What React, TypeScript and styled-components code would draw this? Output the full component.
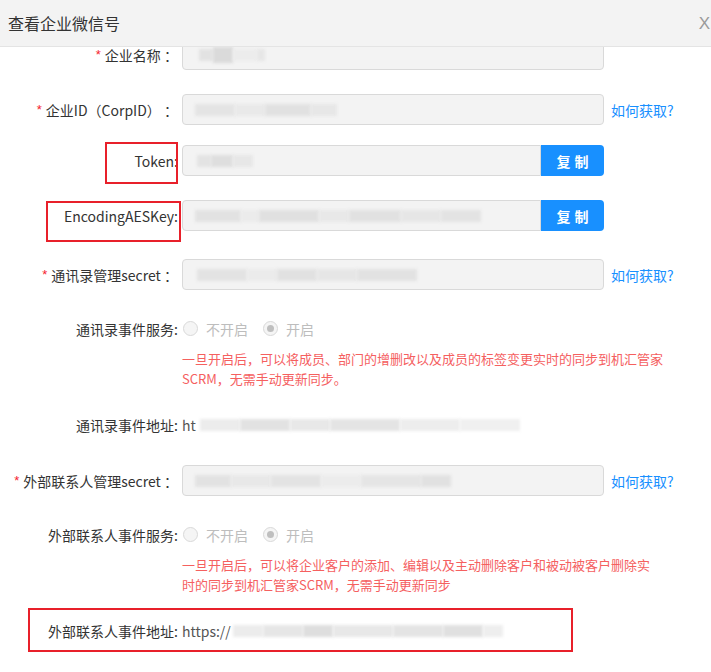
import React from "react";
import styled, { createGlobalStyle } from "styled-components";

const Global = createGlobalStyle`
  html, body { margin: 0; padding: 0; background: #fff; }
  body { font-family: "Noto Sans CJK SC", "Noto Sans", sans-serif; color: #333; }
`;

const Page = styled.div`
  width: 711px;
  height: 672px;
  overflow: hidden;
  display: flex;
  flex-direction: column;
  background: #fff;
`;

const Header = styled.div`
  flex: none;
  height: 46px;
  background: #f3f3f3;
  border-bottom: 1px solid #e4e4e4;
  display: flex;
  align-items: center;
  justify-content: space-between;
  padding: 0 1px 0 8px;
  position: relative;
  z-index: 2;
`;

const Title = styled.div`
  font-size: 16px;
  color: #333;
`;

const Close = styled.div`
  font-family: "Liberation Sans", Arial, sans-serif;
  font-size: 17px;
  color: #9a9a9a;
  margin-top: 2px;
`;

const Body = styled.div`
  flex: 1;
  overflow: hidden;
`;

const Scroller = styled.div`
  margin-top: -8px;
  display: flex;
  flex-direction: column;
`;

const Row = styled.div<{ $mt: number; $top?: boolean }>`
  position: relative;
  display: flex;
  align-items: ${(p) => (p.$top ? "flex-start" : "center")};
  margin-top: ${(p) => p.$mt}px;
  min-height: 31px;
`;

const Label = styled.div`
  flex: none;
  width: 178px;
  height: 31px;
  display: flex;
  align-items: center;
  justify-content: flex-end;
  font-size: 14px;
  color: #333;
  white-space: nowrap;
`;

const Star = styled.span`
  color: #f5222d;
  font-size: 13px;
  margin-right: 4px;
  font-family: "Liberation Sans", sans-serif;
`;

const Field = styled.div`
  margin-left: 4px;
  display: flex;
  align-items: center;
`;

const InputBox = styled.div<{ $w: number; $joined?: boolean }>`
  box-sizing: border-box;
  width: ${(p) => p.$w}px;
  height: 31px;
  background: #f3f3f3;
  border: 1px solid #d9d9d9;
  border-radius: ${(p) => (p.$joined ? "4px 0 0 4px" : "4px")};
  display: flex;
  align-items: center;
  padding-left: 10px;
  overflow: hidden;
`;

const CopyButton = styled.button`
  box-sizing: border-box;
  width: 63px;
  height: 31px;
  border: none;
  background: #1890ff;
  color: #fff;
  border-radius: 0 4px 4px 0;
  font-family: "Noto Sans CJK SC", sans-serif;
  font-size: 14px;
  font-weight: 700;
  letter-spacing: 4px;
  padding: 0 0 0 4px;
`;

const HelpLink = styled.a`
  margin-left: 7px;
  font-size: 14px;
  color: #1890ff;
  text-decoration: none;
`;

const Smudge = styled.span<{ $w: number; $c: string; $h?: number }>`
  display: inline-block;
  width: ${(p) => p.$w}px;
  height: ${(p) => p.$h ?? 12}px;
  background: ${(p) => p.$c};
  filter: blur(1.5px);
  flex: none;
`;

const Column = styled.div`
  margin-left: 4px;
  display: flex;
  flex-direction: column;
`;

const RadioGroup = styled.div`
  height: 31px;
  display: flex;
  align-items: center;
`;

const RadioItem = styled.label`
  display: flex;
  align-items: center;
  margin-right: 14px;
  font-size: 14px;
  color: #bdbdbd;
`;

const RadioCircle = styled.span<{ $checked?: boolean }>`
  box-sizing: border-box;
  width: 15px;
  height: 15px;
  border-radius: 50%;
  border: 1px solid #d9d9d9;
  background: #f5f5f5;
  margin: 0 8px 0 1px;
  display: flex;
  align-items: center;
  justify-content: center;
  &::after {
    content: "";
    display: ${(p) => (p.$checked ? "block" : "none")};
    width: 7px;
    height: 7px;
    border-radius: 50%;
    background: #bfbfbf;
  }
`;

const Hint = styled.div`
  margin-top: 5px;
  font-size: 13px;
  line-height: 20px;
  color: #f5605f;
  white-space: nowrap;
`;

const Value = styled.div`
  margin-left: 4px;
  display: flex;
  align-items: center;
  font-size: 14px;
  color: #555;
  height: 31px;
`;

const Annotation = styled.div<{ $l: number; $t: number; $w: number; $h: number }>`
  position: absolute;
  left: ${(p) => p.$l}px;
  top: ${(p) => p.$t}px;
  width: ${(p) => p.$w}px;
  height: ${(p) => p.$h}px;
  box-sizing: border-box;
  border: 2px solid #e8202a;
  pointer-events: none;
`;

type S = [number, string, number?];

const Smudges = ({ items, ml = 0 }: { items: S[]; ml?: number }) => (
  <>
    {ml ? <Smudge $w={ml} $c="transparent" /> : null}
    {items.map(([w, c, h], i) => (
      <Smudge key={i} $w={w} $c={c} $h={h} />
    ))}
  </>
);

export default function App() {
  return (
    <Page>
      <Global />
      <Header>
        <Title>查看企业微信号</Title>
        <Close>X</Close>
      </Header>
      <Body>
        <Scroller>
          <Row $mt={0}>
            <Label>
              <Star>*</Star>企业名称 ：
            </Label>
            <Field>
              <InputBox $w={422}>
                <Smudges items={[[14, "#e2e2e2"], [20, "#dadada", 16], [24, "#ececec"], [8, "#e6e6e6"]]} ml={6} />
              </InputBox>
            </Field>
          </Row>

          <Row $mt={24}>
            <Label>
              <Star>*</Star>企业ID（CorpID） ：
            </Label>
            <Field>
              <InputBox $w={422}>
                <Smudges items={[[40, "#e4e4e4"], [30, "#e9e9e9"], [46, "#e1e1e1"], [26, "#e7e7e7"]]} ml={2} />
              </InputBox>
              <HelpLink>如何获取?</HelpLink>
            </Field>
          </Row>

          <Row $mt={20}>
            <Label>Token:</Label>
            <Annotation $l={105} $t={-3} $w={73} $h={42} />
            <Field>
              <InputBox $w={359} $joined>
                <Smudges items={[[14, "#e3e3e3"], [22, "#dedede"], [20, "#e7e7e7"]]} ml={4} />
              </InputBox>
              <CopyButton>复制</CopyButton>
            </Field>
          </Row>

          <Row $mt={24}>
            <Label>EncodingAESKey:</Label>
            <Annotation $l={46} $t={1} $w={135} $h={41} />
            <Field>
              <InputBox $w={359} $joined>
                <Smudges
                  items={[[46, "#e2e2e2"], [18, "#ebebeb"], [60, "#e0e0e0"], [30, "#e8e8e8"], [52, "#e1e1e1"], [40, "#e6e6e6"], [40, "#e3e3e3"]]}
                  ml={2}
                />
              </InputBox>
              <CopyButton>复制</CopyButton>
            </Field>
          </Row>

          <Row $mt={28}>
            <Label>
              <Star>*</Star>通讯录管理secret ：
            </Label>
            <Field>
              <InputBox $w={422}>
                <Smudges
                  items={[[50, "#e3e3e3"], [30, "#ebebeb"], [40, "#e1e1e1"], [40, "#e6e6e6"], [60, "#e2e2e2"]]}
                  ml={4}
                />
              </InputBox>
              <HelpLink>如何获取?</HelpLink>
            </Field>
          </Row>

          <Row $mt={23} $top>
            <Label>通讯录事件服务:</Label>
            <Column>
              <RadioGroup>
                <RadioItem>
                  <RadioCircle />
                  不开启
                </RadioItem>
                <RadioItem>
                  <RadioCircle $checked />
                  开启
                </RadioItem>
              </RadioGroup>
              <Hint>
                一旦开启后，可以将成员、部门的增删改以及成员的标签变更实时的同步到机汇管家
                <br />
                SCRM，无需手动更新同步。
              </Hint>
            </Column>
          </Row>

          <Row $mt={20}>
            <Label>通讯录事件地址:</Label>
            <Value>
              ht
              <Smudges
                items={[[40, "#ececec"], [50, "#e2e2e2"], [40, "#e8e8e8"], [70, "#e4e4e4"], [60, "#ededed"], [60, "#f0f0f0"]]}
                ml={4}
              />
            </Value>
          </Row>

          <Row $mt={25}>
            <Label>
              <Star>*</Star>外部联系人管理secret ：
            </Label>
            <Field>
              <InputBox $w={422}>
                <Smudges
                  items={[[36, "#e2e2e2"], [40, "#e8e8e8"], [50, "#e3e3e3"], [40, "#ececec"], [60, "#e5e5e5"], [30, "#e1e1e1"]]}
                  ml={2}
                />
              </InputBox>
              <HelpLink>如何获取?</HelpLink>
            </Field>
          </Row>

          <Row $mt={23} $top>
            <Label>外部联系人事件服务:</Label>
            <Column>
              <RadioGroup>
                <RadioItem>
                  <RadioCircle />
                  不开启
                </RadioItem>
                <RadioItem>
                  <RadioCircle $checked />
                  开启
                </RadioItem>
              </RadioGroup>
              <Hint>
                一旦开启后，可以将企业客户的添加、编辑以及主动删除客户和被动被客户删除实
                <br />
                时的同步到机汇管家SCRM，无需手动更新同步
              </Hint>
            </Column>
          </Row>

          <Row $mt={20}>
            <Annotation $l={28} $t={-7} $w={545} $h={44} />
            <Label>外部联系人事件地址:</Label>
            <Value>
              https://
              <Smudges
                items={[[30, "#ececec"], [40, "#e6e6e6"], [30, "#dedede"], [60, "#e8e8e8"], [50, "#e4e4e4"], [40, "#e0e0e0"], [20, "#eeeeee"]]}
                ml={2}
              />
            </Value>
          </Row>
        </Scroller>
      </Body>
    </Page>
  );
}
